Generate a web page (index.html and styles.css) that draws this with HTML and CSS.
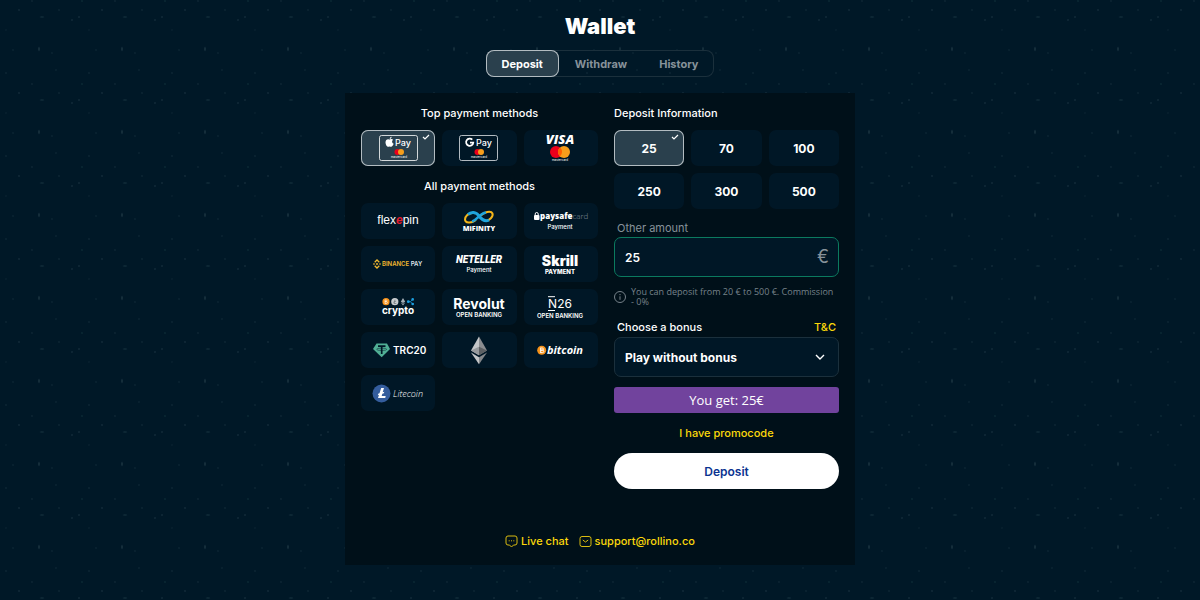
FILE: index.html
```
<!DOCTYPE html>
<html lang="en">
<head>
    <meta charset="UTF-8">
    <meta name="viewport" content="width=device-width, initial-scale=1.0">
    <title>Wallet</title>
    <link rel="stylesheet" href="styles.css">
</head>
<body>
    <h1>Wallet</h1>

    <!-- Tabs -->
    <nav class="tabs">
        <button type="button" class="tab active">Deposit</button>
        <button type="button" class="tab">Withdraw</button>
        <button type="button" class="tab">History</button>
    </nav>

    <main class="panel">
        <div class="columns">
            <!-- Payment methods -->
            <section class="methods">
                <h2>Top payment methods</h2>
                <div class="grid">
                    <button type="button" class="tile active" aria-label="Apple Pay">
                        <svg class="logo" viewBox="0 0 75 36">
                            <rect x="18.5" y="5.5" width="38" height="25" rx="2" fill="none" stroke="#fff" stroke-width=".8"/>
                            <path d="M29 9.5c1-.7 2.3-.5 3.1.3-1.6 1-1.3 3.3.5 4-.5 1.6-1.5 3-2.5 3-.6 0-.8-.3-1.5-.3s-.9.3-1.5.3c-1.2 0-2.6-2.3-2.6-4.3 0-2.3 1.5-3.4 2.9-3.2.7.1 1.1.4 1.6.2zM28.7 9c0-1.2.8-2.1 1.9-2.3.1 1.2-.8 2.3-1.9 2.3z" fill="#fff"/>
                            <text x="34" y="16" class="pay">Pay</text>
                            <circle cx="36.5" cy="22" r="3" fill="#eb001b"/>
                            <circle cx="40" cy="22" r="3" fill="#f79e1b"/>
                            <text x="38" y="28" class="micro">mastercard</text>
                        </svg>
                        <svg class="check" viewBox="0 0 8 6"><path d="M1 3l2 2 4-4"/></svg>
                    </button>
                    <button type="button" class="tile" aria-label="Google Pay">
                        <svg class="logo" viewBox="0 0 75 36">
                            <rect x="17.5" y="5.5" width="38" height="25" rx="2" fill="none" stroke="#dfe5e8" stroke-width=".8"/>
                            <path d="M30.3 9.7a3.6 3.6 0 1 0 1 2.9h-3.3" fill="none" stroke="#fff" stroke-width="1.7"/>
                            <text x="34" y="16" class="pay">Pay</text>
                            <circle cx="35.5" cy="22" r="3" fill="#eb001b"/>
                            <circle cx="39" cy="22" r="3" fill="#f79e1b"/>
                            <text x="37" y="28" class="micro">mastercard</text>
                        </svg>
                    </button>
                    <button type="button" class="tile" aria-label="Visa and Mastercard">
                        <svg class="logo" viewBox="0 0 75 36">
                            <text x="37" y="14" class="visa">VISA</text>
                            <circle cx="33" cy="22" r="6" fill="#eb001b"/>
                            <circle cx="41" cy="22" r="6" fill="#f79e1b"/>
                            <path d="M37 17.5a6 6 0 0 1 0 9a6 6 0 0 1 0-9z" fill="#ff5f00"/>
                            <text x="37" y="31" class="micro">mastercard</text>
                        </svg>
                    </button>
                </div>

                <h2>All payment methods</h2>
                <div class="grid">
                    <button type="button" class="tile" aria-label="Flexepin">
                        <svg class="logo" viewBox="0 0 75 36">
                            <text x="37" y="21" class="flexepin">flex<tspan class="red">e</tspan>pin</text>
                        </svg>
                    </button>
                    <button type="button" class="tile" aria-label="MiFinity">
                        <svg class="logo" viewBox="0 0 75 36">
                            <path d="M34 17c-5 4-11 3-11-.5 0-3 3-6 7-6.5" fill="none" stroke="#f4b61a" stroke-width="2"/>
                            <path d="M38 13c4-4 11-6 12.5-2.5 1 3-3 7-7 7.5" fill="none" stroke="#f4b61a" stroke-width="2"/>
                            <path d="M26 11.5c3-3 8-3 11 1.5 3 4 6 6 10 4" fill="none" stroke="#1fa4dc" stroke-width="3"/>
                            <path d="M30 18.5c5-1 7-8 14-9" fill="none" stroke="#1fa4dc" stroke-width="2.5"/>
                            <text x="37" y="28" class="mifinity">MiFINITY</text>
                        </svg>
                    </button>
                    <button type="button" class="tile" aria-label="Paysafecard">
                        <svg class="logo" viewBox="0 0 75 36">
                            <rect x="11" y="12" width="5.5" height="5" rx="1" fill="#fff"/>
                            <path d="M12.2 12.5v-1.5a1.5 1.5 0 0 1 3 0v1.5" fill="none" stroke="#fff" stroke-width="1"/>
                            <text x="17" y="16" class="paysafe">paysafe<tspan class="card">card</tspan></text>
                            <text x="37" y="26" class="sub">Payment</text>
                        </svg>
                    </button>
                    <button type="button" class="tile" aria-label="Binance Pay">
                        <svg class="logo" viewBox="0 0 75 36">
                            <path d="M13.7 16.2l2.3-2.2 2.3 2.2M13.7 19.8l2.3 2.2 2.3-2.2" fill="none" stroke="#f3ba2f" stroke-width="1.3"/>
                            <path d="M12 18l1-1 1 1-1 1zM18 18l1-1 1 1-1 1zM14.8 18l1.2-1.2 1.2 1.2-1.2 1.2z" fill="#f3ba2f"/>
                            <text x="21" y="20" class="binance">BINANCE <tspan class="white">PAY</tspan></text>
                        </svg>
                    </button>
                    <button type="button" class="tile" aria-label="Neteller">
                        <svg class="logo" viewBox="0 0 75 36">
                            <text x="37" y="17" class="neteller">NETELLER</text>
                            <text x="37" y="26" class="sub">Payment</text>
                        </svg>
                    </button>
                    <button type="button" class="tile" aria-label="Skrill">
                        <svg class="logo" viewBox="0 0 75 36">
                            <text x="37" y="20" class="skrill">Skrill</text>
                            <text x="37" y="28" class="sub bold">PAYMENT</text>
                        </svg>
                    </button>
                    <button type="button" class="tile" aria-label="Crypto">
                        <svg class="logo" viewBox="0 0 75 36">
                            <circle cx="25" cy="12.7" r="3.6" fill="#f7931a"/>
                            <path d="M24 10.8v3.8M24 11h1.3a.9.9 0 0 1 0 1.7h-1.3h1.5a.9.9 0 0 1 0 1.8H24" fill="none" stroke="#fff" stroke-width=".6"/>
                            <circle cx="33.8" cy="12.7" r="3.6" fill="#c9cdd0"/>
                            <path d="M34 10.6l-1 3.9h2.3M32.3 13.3l2.8-1.2" fill="none" stroke="#6b747a" stroke-width=".7"/>
                            <path d="M42 9l2.2 3.8-2.2 1.3-2.2-1.3zM39.8 13.5l2.2 3 2.2-3-2.2 1.2z" fill="#a3adb5"/>
                            <path d="M47.5 12.7h2l2-2.2M49.5 12.7l2 2.2" fill="none" stroke="#1b9fe0" stroke-width=".8"/>
                            <circle cx="47.3" cy="12.7" r="1.4" fill="#1b9fe0"/>
                            <circle cx="51.7" cy="10.4" r="1.3" fill="#1b9fe0"/>
                            <circle cx="51.7" cy="15" r="1.3" fill="#1b9fe0"/>
                            <text x="37" y="25" class="crypto">crypto</text>
                        </svg>
                    </button>
                    <button type="button" class="tile" aria-label="Revolut">
                        <svg class="logo" viewBox="0 0 75 36">
                            <text x="37" y="20" class="revolut">Revolut</text>
                            <text x="37" y="28" class="open">OPEN BANKING</text>
                        </svg>
                    </button>
                    <button type="button" class="tile" aria-label="N26">
                        <svg class="logo" viewBox="0 0 75 36">
                            <path d="M25 7.7h7M25 21.5h7" stroke="#fff" stroke-width="1"/>
                            <text x="37" y="19" class="n26">N26</text>
                            <text x="37" y="29" class="open">OPEN BANKING</text>
                        </svg>
                    </button>
                    <button type="button" class="tile" aria-label="TRC20">
                        <svg class="logo" viewBox="0 0 75 36">
                            <path d="M15.5 11.5h10.5l3 5.5-8.3 8.3L12 17z" fill="#50af95"/>
                            <path d="M17 14.2h7.5M20.7 14v8" stroke="#001726" stroke-width="1.7"/>
                            <ellipse cx="20.7" cy="17.3" rx="5" ry="1.2" fill="none" stroke="#001726" stroke-width=".5"/>
                            <text x="32" y="22" class="trc">TRC20</text>
                        </svg>
                    </button>
                    <button type="button" class="tile" aria-label="Ethereum">
                        <svg class="logo" viewBox="0 0 75 36">
                            <path d="M37 4.5v18.8l-8-4.9z" fill="#c4c6c8"/>
                            <path d="M37 4.5v18.8l8-4.9z" fill="#8b8d90"/>
                            <path d="M37 14.7v8.6l8-4.9z" fill="#5d6063"/>
                            <path d="M37 14.7v8.6l-8-4.9z" fill="#96999c"/>
                            <path d="M29 20.5l8 4.7v7z" fill="#c4c6c8"/>
                            <path d="M45 20.5l-8 4.7v7z" fill="#85888b"/>
                        </svg>
                    </button>
                    <button type="button" class="tile" aria-label="Bitcoin">
                        <svg class="logo" viewBox="0 0 75 36">
                            <circle cx="18.7" cy="18.3" r="4.5" fill="#f7931a"/>
                            <path d="M17.6 15.7v5.2M17.6 16h1.7a1.1 1.1 0 0 1 0 2.2h-1.7h2a1.2 1.2 0 0 1 0 2.4h-2" fill="none" stroke="#fff" stroke-width=".9"/>
                            <text x="24" y="22" class="bitcoin">bitcoin</text>
                        </svg>
                    </button>
                    <button type="button" class="tile" aria-label="Litecoin">
                        <svg class="logo" viewBox="0 0 75 36">
                            <circle cx="20.5" cy="18.5" r="9" fill="#345d9d"/>
                            <path d="M20.2 13h2.8l-1.3 4.3 1.6-.6-.4 1.5-1.6.6-.6 2.2h4l-.5 2h-7.2l1-3.3-1.2.5.4-1.5 1.3-.5z" fill="#fff"/>
                            <text x="32" y="22" class="litecoin">Litecoin</text>
                        </svg>
                    </button>
                </div>
            </section>

            <!-- Deposit form -->
            <form class="deposit">
                <h2>Deposit Information</h2>
                <div class="grid">
                    <button type="button" class="tile amount active">25
                        <svg class="check" viewBox="0 0 8 6"><path d="M1 3l2 2 4-4"/></svg>
                    </button>
                    <button type="button" class="tile amount">70</button>
                    <button type="button" class="tile amount">100</button>
                    <button type="button" class="tile amount">250</button>
                    <button type="button" class="tile amount">300</button>
                    <button type="button" class="tile amount">500</button>
                </div>

                <label class="muted" for="amount">Other amount</label>
                <div class="field green">
                    <input type="text" id="amount" value="25" inputmode="numeric">
                    <span class="currency">€</span>
                </div>
                <p class="info">
                    <svg viewBox="0 0 12 12"><circle cx="6" cy="6" r="5.5"/><path d="M6 5.3v3.5M6 3v1.2"/></svg>
                    <span>You can deposit from 20 € to 500 €. Commission <span class="nowrap">- 0%</span></span>
                </p>

                <div class="bonus-head">
                    <label for="bonus">Choose a bonus</label>
                    <a href="#terms">T&amp;C</a>
                </div>
                <div class="field">
                    <select id="bonus">
                        <option>Play without bonus</option>
                    </select>
                    <svg class="arrow" viewBox="0 0 10 6"><path d="M1 1l4 4 4-4"/></svg>
                </div>

                <p class="total">You get: 25€</p>
                <a class="promo" href="#promo">I have promocode</a>
                <button type="submit" class="submit">Deposit</button>
            </form>
        </div>

        <footer>
            <a href="#chat">
                <svg viewBox="0 0 13 13"><path d="M3 1h7a2 2 0 0 1 2 2v5a2 2 0 0 1-2 2H8.5L6.5 12l-2-2H3a2 2 0 0 1-2-2V3a2 2 0 0 1 2-2z"/><path d="M3.7 5.8h1M6 5.8h1M8.3 5.8h1"/></svg>
                Live chat
            </a>
            <a href="mailto:support@rollino.co">
                <svg viewBox="0 0 13 13"><rect x="1" y="1.5" width="11" height="10" rx="2"/><path d="M3.8 5l2.7 2 2.7-2"/></svg>
                support@rollino.co
            </a>
        </footer>
    </main>
</body>
</html>
```
FILE: styles.css
```
* {
    box-sizing: border-box;
}

body {
    margin: 0;
    padding: 11px 16px 35px;
    color: #fff;
    font-family: Inter, "Open Sans", sans-serif;
    font-size: 11px;
    background-color: #001827;
    /* star field, repeated every 83px */
    background-image:
        radial-gradient(ellipse 1px 3px at 39px 49px, #2b4450, transparent),
        radial-gradient(circle at 79px 17px, #2b4450, transparent 1px),
        radial-gradient(circle at 72px 20px, #2b4450, transparent 1px),
        radial-gradient(ellipse 3px 1px at 42px 17px, #1a3643, transparent),
        radial-gradient(circle at 59px 10px, #1f3844, transparent 1px),
        radial-gradient(circle at 19px 10px, #2b4450, transparent 1px),
        radial-gradient(circle at 6px 73px, #1f3844, transparent 1px),
        radial-gradient(circle at 56px 70px, #1a3440, transparent 1px),
        radial-gradient(circle at 52px 53px, #1a3440, transparent 1px),
        radial-gradient(circle at 6px 30px, #142c38, transparent 1px),
        radial-gradient(circle at 13px 50px, #1a3440, transparent 1px),
        radial-gradient(circle at 32px 1px, #1f3844, transparent 1px),
        radial-gradient(circle at 82px 1px, #1a4044, transparent 1px);
    background-size: 83px 83px;
}

h1 {
    margin: 0 0 9px;
    font-size: 22px;
    font-weight: 900;
    line-height: 30px;
    text-align: center;
}

h2 {
    margin: 10px 0 7px;
    font-size: 11px;
    font-weight: 500;
    line-height: 20px;
}

button,
input,
select {
    font-family: inherit;
    color: inherit;
}

button {
    padding: 0;
    border: 0;
    cursor: pointer;
}

a {
    color: #fcd80a;
    font-weight: 500;
    text-decoration: none;
}

p {
    margin: 0;
}

/* Tabs */
.tabs {
    display: flex;
    width: fit-content;
    margin: 0 auto 16px;
    border-radius: 8px;
    box-shadow: inset 0 0 0 1px #1b303c;
}

.tab {
    height: 27px;
    padding: 0 16px;
    border-radius: 8px;
    background: none;
    color: #87929a;
    font-size: 11px;
    font-weight: 700;
}

.tab.active {
    background-color: #2a404d;
    box-shadow: inset 0 0 0 1px #b3bcc1;
    color: #fff;
}

/* Panel */
.panel {
    max-width: 510px;
    margin: 0 auto;
    padding: 0 16px 14px;
    background-color: #001019;
}

.columns {
    display: grid;
    grid-template-columns: minmax(0, 237fr) minmax(0, 225fr);
    gap: 16px;
}

.methods h2 {
    text-align: center;
}

.grid {
    display: grid;
    grid-template-columns: repeat(3, minmax(0, 1fr));
    gap: 7px;
}

.tile {
    position: relative;
    display: flex;
    align-items: center;
    justify-content: center;
    height: 36px;
    border-radius: 7px;
    background-color: #001726;
}

.tile.active {
    background-color: #2a404d;
    box-shadow: inset 0 0 0 1px #b3bcc1;
}

.amount {
    font-size: 12px;
    font-weight: 700;
}

.check {
    position: absolute;
    top: 4px;
    right: 5px;
    width: 8px;
    height: 6px;
    fill: none;
    stroke: #fff;
    stroke-width: 1.2;
}

/* Logos */
.logo {
    flex: none;
    width: 75px;
    height: 36px;
    fill: #fff;
}

.pay {
    font-size: 9px;
    font-weight: 500;
}

.micro {
    font-size: 3px;
    text-anchor: middle;
}

.visa {
    font: italic 800 13px "Open Sans", sans-serif;
    text-anchor: middle;
}

.flexepin {
    font: 400 12px "Liberation Sans", sans-serif;
    text-anchor: middle;
}

.red {
    fill: #e31b2d;
    font-style: italic;
    font-weight: 700;
}

.mifinity {
    font: 800 7px "Open Sans", sans-serif;
    text-anchor: middle;
}

.paysafe {
    font: 800 8px "Open Sans", sans-serif;
}

.card {
    fill: #84929b;
    font-weight: 300;
}

.sub {
    font-size: 6px;
    font-weight: 500;
    text-anchor: middle;
}

.bold {
    font-weight: 800;
}

.open {
    font-size: 6px;
    font-weight: 600;
    text-anchor: middle;
}

.binance {
    fill: #f3ba2f;
    font-size: 6px;
    font-weight: 600;
}

.white {
    fill: #dfe3e6;
}

.neteller {
    font: italic 900 10px Roboto, sans-serif;
    text-anchor: middle;
}

.skrill {
    font-size: 14px;
    font-weight: 900;
    text-anchor: middle;
}

.crypto {
    font-size: 10px;
    font-weight: 700;
    text-anchor: middle;
}

.revolut {
    font-size: 14px;
    font-weight: 700;
    text-anchor: middle;
}

.n26 {
    font-size: 12px;
    text-anchor: middle;
}

.trc {
    font-size: 10px;
    font-weight: 600;
}

.bitcoin {
    font: italic 700 11px "Open Sans", sans-serif;
}

.litecoin {
    font: italic 300 9px "Open Sans", sans-serif;
}

/* Form */
label {
    font-weight: 500;
}

.muted {
    display: block;
    margin-top: 10px;
    padding-left: 3px;
    color: #87929a;
    font-weight: 400;
    line-height: 18px;
}

.field {
    position: relative;
}

.field input,
.field select {
    display: block;
    width: 100%;
    height: 40px;
    margin: 0;
    padding: 0 10px;
    border: 1px solid #1b303c;
    border-radius: 7px;
    outline: none;
    background-color: #001726;
    font-size: 12px;
    font-weight: 600;
    appearance: none;
}

.field select {
    font-weight: 700;
}

.field.green input {
    border-color: #0b7a5f;
}

.currency {
    position: absolute;
    top: 10px;
    right: 10px;
    color: #87929a;
    font-size: 18px;
    line-height: 20px;
}

.arrow {
    position: absolute;
    top: 17px;
    right: 14px;
    width: 10px;
    height: 6px;
    fill: none;
    stroke: #fff;
    stroke-width: 1.4;
    pointer-events: none;
}

.info {
    display: flex;
    align-items: center;
    gap: 5px;
    margin-top: 10px;
    color: #76828a;
    font-family: "Open Sans", sans-serif;
    font-size: 9px;
    line-height: 10px;
}

.info svg {
    flex: none;
    width: 12px;
    height: 12px;
    fill: none;
    stroke: #76828a;
}

.nowrap {
    white-space: nowrap;
}

.bonus-head {
    display: flex;
    justify-content: space-between;
    margin-top: 10px;
    padding: 0 3px;
    line-height: 20px;
}

.total {
    margin-top: 10px;
    border-radius: 3px;
    background-color: #71439d;
    font-family: "Open Sans", sans-serif;
    font-size: 13px;
    line-height: 26px;
    text-align: center;
}

.promo {
    display: block;
    margin: 10px 0;
    line-height: 20px;
    text-align: center;
}

.submit {
    width: 100%;
    height: 36px;
    border-radius: 18px;
    background-color: #fff;
    color: #0b3390;
    font-size: 12px;
    font-weight: 600;
}

footer {
    display: flex;
    justify-content: center;
    gap: 10px;
    margin-top: 42px;
    line-height: 20px;
}

footer a {
    display: flex;
    align-items: center;
    gap: 3px;
}

footer svg {
    width: 13px;
    height: 13px;
    fill: none;
    stroke: #d9bb10;
}
```
